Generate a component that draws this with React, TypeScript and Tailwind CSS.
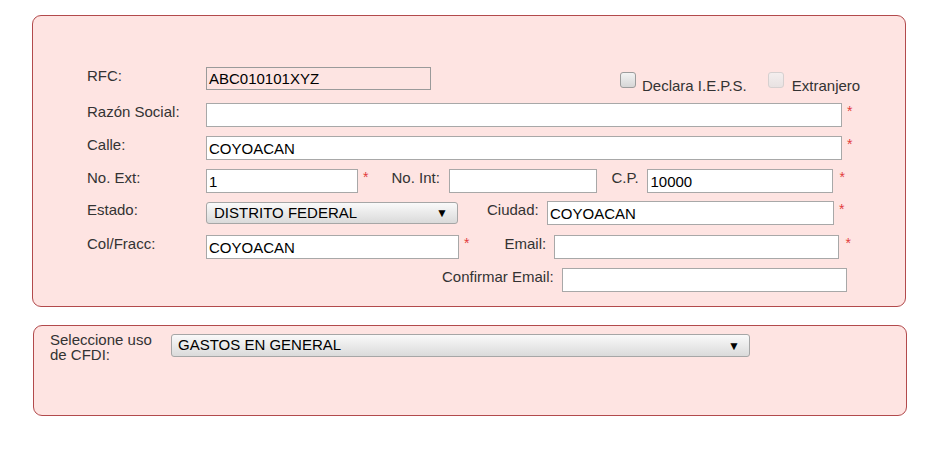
import React from "react";

const Star = ({ className = "" }: { className?: string }) => (
  <span className={"text-[#e23b3b] text-[14px] leading-none self-start mt-[1px] " + className}>*</span>
);

const Label = ({ children, className = "" }: { children: React.ReactNode; className?: string }) => (
  <span className={"text-[15px] leading-[16px] text-[#333] pt-[1px] whitespace-nowrap " + className}>{children}</span>
);

const Input = ({ value = "", className = "" }: { value?: string; className?: string }) => (
  <div
    className={
      "h-[24px] border border-[#a8a8a8] bg-white px-[2px] text-[15px] leading-[22px] text-black pt-[1px] " +
      className
    }
  >
    {value}
  </div>
);

const Select = ({ value, className = "", textPl = "pl-[7px]" }: { value: string; className?: string; textPl?: string }) => (
  <div
    className={
      "flex items-center justify-between h-[22px] border border-[#a6a6a6] rounded-[3px] bg-gradient-to-b from-[#fafafa] to-[#dadada] pr-[9px] text-[15px] text-black " +
      textPl +
      " " +
      className
    }
  >
    <span>{value}</span>
    <span className="text-[12px] leading-none">▼</span>
  </div>
);

const Checkbox = ({ disabled = false }: { disabled?: boolean }) => (
  <div
    className={
      "w-[16px] h-[16px] rounded-[3px] border " +
      (disabled
        ? "border-[#d6d0d0] bg-gradient-to-b from-[#f4eeee] to-[#e8e2e2]"
        : "border-[#9c9c9c] bg-gradient-to-b from-[#f3f3f3] to-[#d6d6d6]")
    }
  />
);

export default function App() {
  return (
    <div className="w-[945px] h-[469px] bg-white font-['Liberation_Sans',Arial,sans-serif] pt-[15px]">
      <div className="ml-[32px] w-[874px] h-[292px] rounded-[9px] border border-[#b24a4c] bg-[#fee4e2] pl-[54px] pt-[51px]">
        {/* RFC row */}
        <div className="flex h-[36px]">
          <Label className="w-[119px]">RFC:</Label>
          <div className="w-[225px] h-[23px] border border-[#9a9a9a] bg-[#fde4e2] px-[2px] text-[15px] leading-[21px] text-black">
            ABC010101XYZ
          </div>
          <div className="flex ml-[189px] mt-[5px]">
            <Checkbox />
            <span className="ml-[6px] mt-[6px] text-[15px] leading-[16px] text-[#333]">Declara I.E.P.S.</span>
            <div className="ml-[21px]">
              <Checkbox disabled />
            </div>
            <span className="ml-[8px] mt-[6px] text-[15px] leading-[16px] text-[#333]">Extranjero</span>
          </div>
        </div>
        {/* Razón Social */}
        <div className="flex h-[33px]">
          <Label className="w-[119px]">Razón Social:</Label>
          <Input className="w-[636px]" />
          <Star className="ml-[5px]" />
        </div>
        {/* Calle */}
        <div className="flex h-[33px]">
          <Label className="w-[119px]">Calle:</Label>
          <Input className="w-[636px]" value="COYOACAN" />
          <Star className="ml-[5px]" />
        </div>
        {/* No. Ext */}
        <div className="flex h-[32px]">
          <Label className="w-[119px]">No. Ext:</Label>
          <Input className="w-[152px]" value="1" />
          <Star className="ml-[5px]" />
          <Label className="ml-[23px] w-[58px]">No. Int:</Label>
          <Input className="w-[148px]" />
          <Label className="ml-[14px] w-[36px]">C.P.</Label>
          <Input className="w-[186px]" value="10000" />
          <Star className="ml-[6px]" />
        </div>
        {/* Estado */}
        <div className="flex h-[34px]">
          <Label className="w-[119px]">Estado:</Label>
          <Select className="w-[252px] mt-[1px]" value="DISTRITO FEDERAL" />
          <Label className="ml-[29px] w-[60px]">Ciudad:</Label>
          <Input className="w-[287px]" value="COYOACAN" />
          <Star className="ml-[5px]" />
        </div>
        {/* Col/Fracc */}
        <div className="flex h-[33px]">
          <Label className="w-[119px]">Col/Fracc:</Label>
          <Input className="w-[253px]" value="COYOACAN" />
          <Star className="ml-[5px]" />
          <Label className="ml-[35px] w-[50px]">Email:</Label>
          <Input className="w-[285px]" />
          <Star className="ml-[6px]" />
        </div>
        {/* Confirmar Email */}
        <div className="flex h-[24px]">
          <Label className="ml-[355px] w-[120px]">Confirmar Email:</Label>
          <Input className="w-[285px]" />
        </div>
      </div>

      <div className="ml-[33px] mt-[18px] w-[874px] h-[91px] rounded-[9px] border border-[#b24a4c] bg-[#fee4e2] pl-[16px] pt-[8px] flex">
        <div className="w-[121px] text-[15px] leading-[15px] text-[#333] -mt-[2px]">
          <div>Seleccione uso</div>
          <div>de CFDI:</div>
        </div>
        <Select className="w-[579px] h-[23px]" value="GASTOS EN GENERAL" textPl="pl-[6px]" />
      </div>
    </div>
  );
}
